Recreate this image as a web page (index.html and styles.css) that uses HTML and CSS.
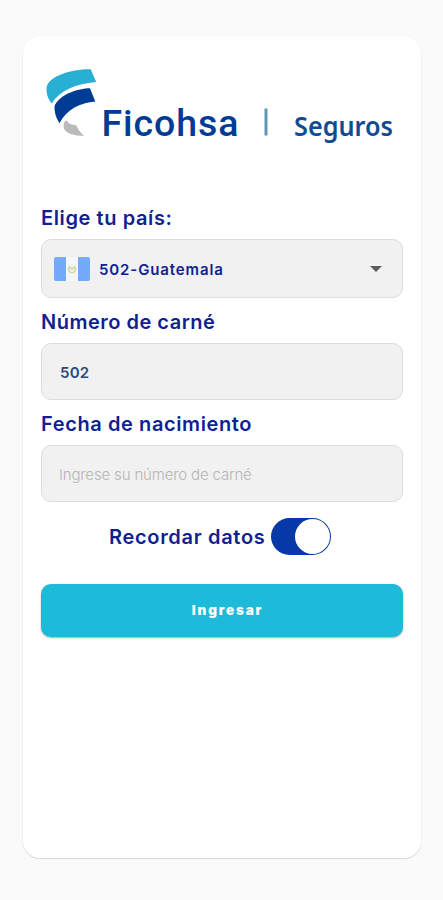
FILE: index.html
```
<!DOCTYPE html>
<html lang="es">
<head>
<meta charset="utf-8">
<title>Ficohsa Seguros</title>
<link rel="stylesheet" href="styles.css">
</head>
<body>
<main class="card">
  <svg class="logo" viewBox="41 60 362 90" role="img" aria-label="Ficohsa Seguros">
    <path fill="#27b0d4" d="M90.700 69.300 L96.200 82 C76 84 60 90 51.700 103.500 Q46 97 46.500 88 C48 76 72 69 90.700 69.300Z"/>
    <path fill="#003c94" d="M90 88.300 L95.300 101.500 C80 103 67 109 59.500 123.300 Q54 115 54.500 106 C60 94 78 88.500 90 88.300Z"/>
    <path fill="#b9babc" d="M66 120.300 L70 124 L76.500 125.500 Q78.500 131 84 136 Q68 136 64 129 Q62.500 123.500 66 120.300Z"/>
    <text class="brand" x="101.500" y="135.500" textLength="137" lengthAdjust="spacing">Ficohsa</text>
    <rect x="264.500" y="108.500" width="3" height="27" fill="#6296b8"/>
    <text class="division" x="294" y="135.500" textLength="99" lengthAdjust="spacingAndGlyphs">Seguros</text>
  </svg>

  <form class="form">
    <label class="label country-label">Elige tu país:</label>
    <div class="field select">
      <svg class="flag" viewBox="0 0 36 24">
        <rect width="36" height="24" rx="2" fill="#f5f6f7"/>
        <path fill="#75aafa" d="M2 0H12V24H2Q0 24 0 22V2Q0 0 2 0ZM24 0H34Q36 0 36 2V22Q36 24 34 24H24Z"/>
        <path d="M16 9Q13 13 16.500 15.500H19.500Q23 13 20 9" fill="none" stroke="#cad9ac" stroke-width="1.500"/>
        <path d="M16 10H20V13H16Z" fill="#e4dfb4"/>
      </svg>
      <span class="country">502-Guatemala</span>
      <svg class="caret" viewBox="0 0 12 6"><path d="M0 0H12L6 6Z" fill="#5c5c5c"/></svg>
    </div>
    <label class="label card-label">Número de carné</label>
    <div class="field number">502</div>
    <label class="label birth-label">Fecha de nacimiento</label>
    <div class="field placeholder">Ingrese su número de carné</div>
    <div class="remember">
      <span class="remember-text">Recordar datos</span>
      <span class="toggle"><span class="knob"></span></span>
    </div>
    <button class="submit" type="button">Ingresar</button>
  </form>
</main>
</body>
</html>
```
FILE: styles.css
```
* { box-sizing: border-box; }
body {
  margin: 0;
  height: 900px;
  padding: 36px 22px 0 23px;
  background: #fafafa;
  font-family: Inter, Roboto, sans-serif;
  color: #101f91;
}
.card {
  height: 822px;
  padding: 24px 18px 0;
  background: #fff;
  border-radius: 17px;
  box-shadow: 0 1px 1px #d8d8d8, 0 0 2px #f0f0f0;
}
.logo { display: block; width: 362px; height: 90px; }
.brand { font: 500 37.5px Roboto, sans-serif; fill: #003c94; }
.division { font: 600 27.5px "Noto Sans", sans-serif; fill: #124b91; }
.form { display: flex; flex-direction: column; padding-top: 54px; }
.label {
  height: 35px;
  font-size: 20px;
  line-height: 28px;
  font-weight: 600;
  white-space: nowrap;
}
.country-label { letter-spacing: .6px; }
.card-label { margin-top: 10px; letter-spacing: .5px; }
.birth-label { margin-top: 10px; letter-spacing: .6px; }
.field {
  display: flex;
  align-items: center;
  height: 57px;
  border: 1px solid #dcdcdc;
  border-radius: 10px;
  background: #f1f1f1;
}
.select { height: 59px; padding: 0 20px 0 12px; }
.flag { width: 36px; height: 24px; margin-right: 9px; }
.country { padding-top: 1px; font-size: 15px; font-weight: 600; letter-spacing: .87px; }
.caret { width: 12px; height: 6px; margin-left: auto; }
.number { padding: 1px 0 0 18px; font-size: 15px; font-weight: 600; letter-spacing: .2px; color: #294b80; }
.placeholder { padding: 1px 0 0 17px; font-size: 15px; font-weight: 300; letter-spacing: -.15px; color: #b5b5b5; white-space: nowrap; }
.remember { display: flex; align-items: center; height: 37px; margin: 16px 0 0 68px; }
.remember-text { width: 162px; font-size: 20px; font-weight: 600; letter-spacing: .68px; white-space: nowrap; }
.toggle {
  display: flex;
  justify-content: flex-end;
  width: 60px;
  height: 37px;
  padding: 1px;
  border-radius: 19px;
  background: #0638a7;
}
.knob { width: 35px; height: 35px; border-radius: 50%; background: #fff; }
.submit {
  height: 53px;
  margin: 29px 0 0;
  padding: 0 0 2px 11px;
  border: 0;
  border-radius: 10px;
  background: #1dbada;
  box-shadow: 0 1px 2px #aaa;
  color: #fff;
  font: 900 13.5px Inter, sans-serif;
  letter-spacing: 1.8px;
}
```
